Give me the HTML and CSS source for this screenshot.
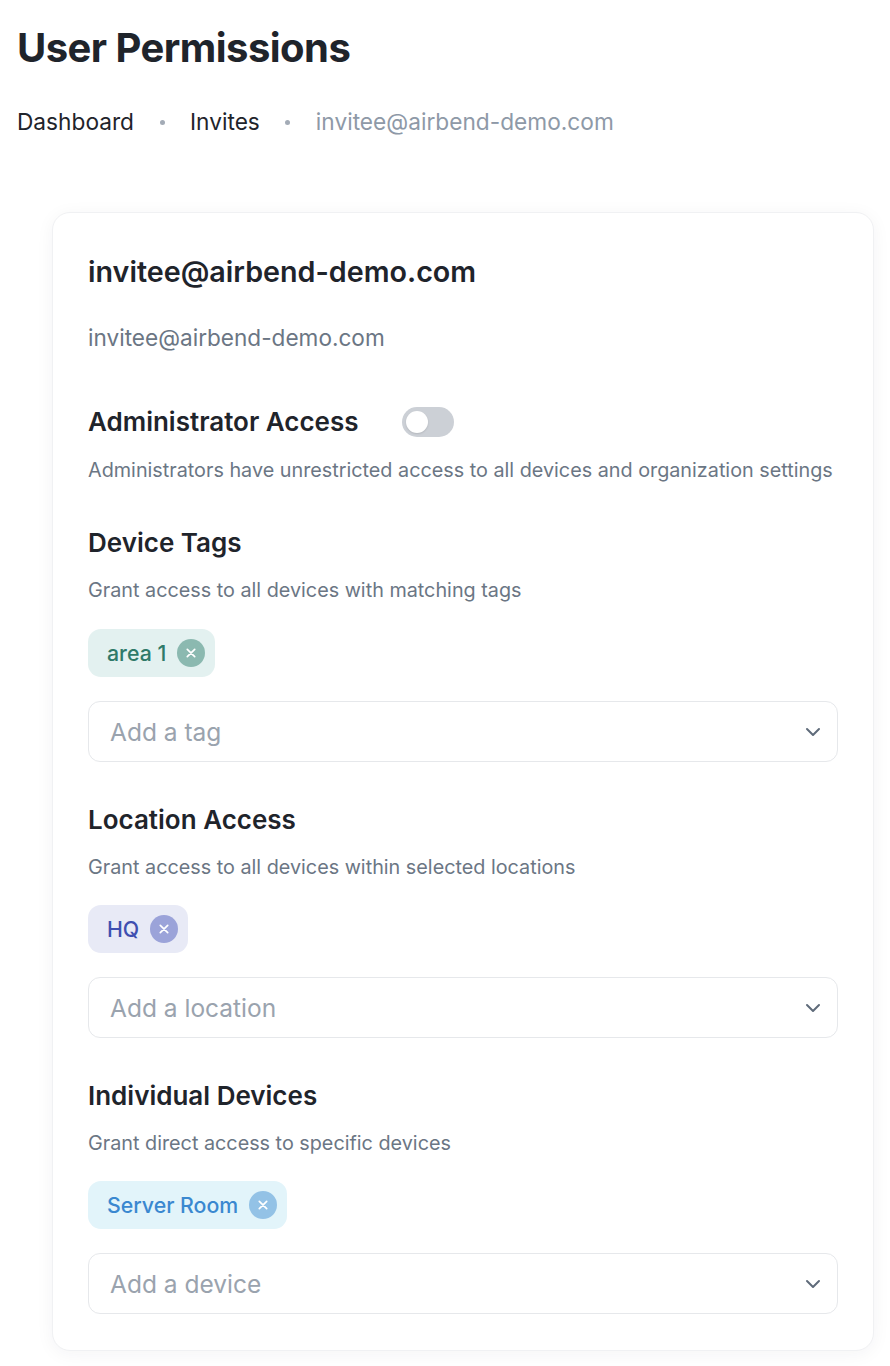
FILE: index.html
```html
<!DOCTYPE html>
<html lang="en">
<head>
<meta charset="utf-8">
<title>User Permissions</title>
<link rel="stylesheet" href="styles.css">
</head>
<body>
<div class="page">
  <h1 class="page-title">User Permissions</h1>
  <nav class="breadcrumb">
    <span class="crumb">Dashboard</span>
    <span class="sep"></span>
    <span class="crumb">Invites</span>
    <span class="sep"></span>
    <span class="crumb current">invitee@airbend-demo.com</span>
  </nav>

  <div class="card">
    <h2 class="card-title">invitee@airbend-demo.com</h2>
    <p class="card-sub">invitee@airbend-demo.com</p>

    <section class="section admin">
      <div class="heading-row">
        <h3 class="section-title">Administrator Access</h3>
        <span class="toggle"><span class="knob"></span></span>
      </div>
      <p class="section-desc">Administrators have unrestricted access to all devices and organization settings</p>
    </section>

    <section class="section tags">
      <h3 class="section-title">Device Tags</h3>
      <p class="section-desc">Grant access to all devices with matching tags</p>
      <div class="chips">
        <span class="chip chip-green">area 1<span class="chip-x"><svg viewBox="0 0 12 12" width="12" height="12"><path d="M2.3 2.3l7.4 7.4M9.7 2.3l-7.4 7.4" stroke="#fff" stroke-width="1.7" stroke-linecap="round"/></svg></span></span>
      </div>
      <div class="select">
        <span class="placeholder">Add a tag</span>
        <svg class="chevron" viewBox="0 0 16 10" width="16" height="10"><path d="M2 2l6 6 6-6" fill="none" stroke="#5f6b7a" stroke-width="2" stroke-linecap="round" stroke-linejoin="round"/></svg>
      </div>
    </section>

    <section class="section">
      <h3 class="section-title">Location Access</h3>
      <p class="section-desc">Grant access to all devices within selected locations</p>
      <div class="chips">
        <span class="chip chip-indigo">HQ<span class="chip-x"><svg viewBox="0 0 12 12" width="12" height="12"><path d="M2.3 2.3l7.4 7.4M9.7 2.3l-7.4 7.4" stroke="#fff" stroke-width="1.7" stroke-linecap="round"/></svg></span></span>
      </div>
      <div class="select">
        <span class="placeholder">Add a location</span>
        <svg class="chevron" viewBox="0 0 16 10" width="16" height="10"><path d="M2 2l6 6 6-6" fill="none" stroke="#5f6b7a" stroke-width="2" stroke-linecap="round" stroke-linejoin="round"/></svg>
      </div>
    </section>

    <section class="section">
      <h3 class="section-title">Individual Devices</h3>
      <p class="section-desc">Grant direct access to specific devices</p>
      <div class="chips">
        <span class="chip chip-blue">Server Room<span class="chip-x"><svg viewBox="0 0 12 12" width="12" height="12"><path d="M2.3 2.3l7.4 7.4M9.7 2.3l-7.4 7.4" stroke="#fff" stroke-width="1.7" stroke-linecap="round"/></svg></span></span>
      </div>
      <div class="select">
        <span class="placeholder">Add a device</span>
        <svg class="chevron" viewBox="0 0 16 10" width="16" height="10"><path d="M2 2l6 6 6-6" fill="none" stroke="#5f6b7a" stroke-width="2" stroke-linecap="round" stroke-linejoin="round"/></svg>
      </div>
    </section>
  </div>
</div>
</body>
</html>
```

FILE: styles.css
```css
* { box-sizing: border-box; }

html, body {
  margin: 0;
  padding: 0;
  background: #ffffff;
}

body {
  font-family: Inter, "Noto Sans", "DejaVu Sans", sans-serif;
  color: #212529;
}

.page {
  padding: 24px 16px 40px 17px;
}

.page-title {
  margin: 0;
  font-size: 40px;
  line-height: 48px;
  font-weight: 700;
  color: #1f242b;
  letter-spacing: -0.55px;
}

.breadcrumb {
  margin-top: 36px;
  display: flex;
  align-items: center;
  gap: 25.5px;
  font-size: 22.7px;
  line-height: 28px;
}

.crumb { color: #1f242b; }
.crumb.current { color: #8e99a7; }

.sep {
  width: 5px;
  height: 5px;
  border-radius: 50%;
  background: #a3abb6;
}

.card {
  margin: 76px 0 0 35px;
  background: #fff;
  border: 1px solid #f0f1f3;
  border-radius: 18px;
  box-shadow: 0 3px 18px rgba(30, 40, 60, 0.05);
  padding: 39px 35px 36px 35px;
}

.card-title {
  margin: 0;
  font-size: 28.7px;
  line-height: 40px;
  font-weight: 600;
  color: #1f242b;
}

.card-sub {
  margin: 32px 0 0;
  font-size: 22.6px;
  line-height: 28px;
  color: #6b7684;
}

.section { margin-top: 42px; }
.section.tags { margin-top: 44px; }
.section.admin { margin-top: 54px; }

.heading-row {
  display: flex;
  align-items: center;
  gap: 43px;
}

.section-title {
  margin: 0;
  font-size: 26px;
  line-height: 32px;
  font-weight: 600;
  color: #1f242b;
}

.section-desc {
  margin: 18px 0 0;
  font-size: 19.8px;
  line-height: 26px;
  color: #6b7684;
}

.admin .section-desc { margin-top: 19px; }

.toggle {
  width: 52px;
  height: 30px;
  border-radius: 15px;
  background: #ccd0d6;
  padding: 4px;
  display: flex;
  align-items: center;
}

.knob {
  width: 22px;
  height: 22px;
  border-radius: 50%;
  background: #fff;
  box-shadow: 0 1px 2px rgba(0,0,0,0.12);
}

.chips {
  margin-top: 25px;
  display: flex;
  gap: 8px;
}

.tags .chips { margin-top: 26px; }

.chip {
  height: 48px;
  display: inline-flex;
  align-items: center;
  gap: 11px;
  padding: 0 10px 0 19px;
  border-radius: 13px;
  font-size: 21.3px;
  font-weight: 500;
}

.chip-x {
  width: 28px;
  height: 28px;
  border-radius: 50%;
  display: inline-flex;
  align-items: center;
  justify-content: center;
}

.chip-green { background: #e3f1f0; color: #2f7a69; }
.chip-green .chip-x { background: #8bb9b0; }

.chip-indigo { background: #e8eaf6; color: #3f4fb0; }
.chip-indigo .chip-x { background: #9ba3d9; }

.chip-blue { background: #e2f4fa; color: #3a88d0; }
.chip-blue .chip-x { background: #93c2e6; }

.select {
  margin-top: 24px;
  height: 61px;
  border: 1px solid #e6e8eb;
  border-radius: 12px;
  display: flex;
  align-items: center;
  justify-content: space-between;
  padding: 0 16px 0 21px;
}

.placeholder {
  font-size: 24.5px;
  color: #9aa3ae;
}

.chevron { display: block; }
```
